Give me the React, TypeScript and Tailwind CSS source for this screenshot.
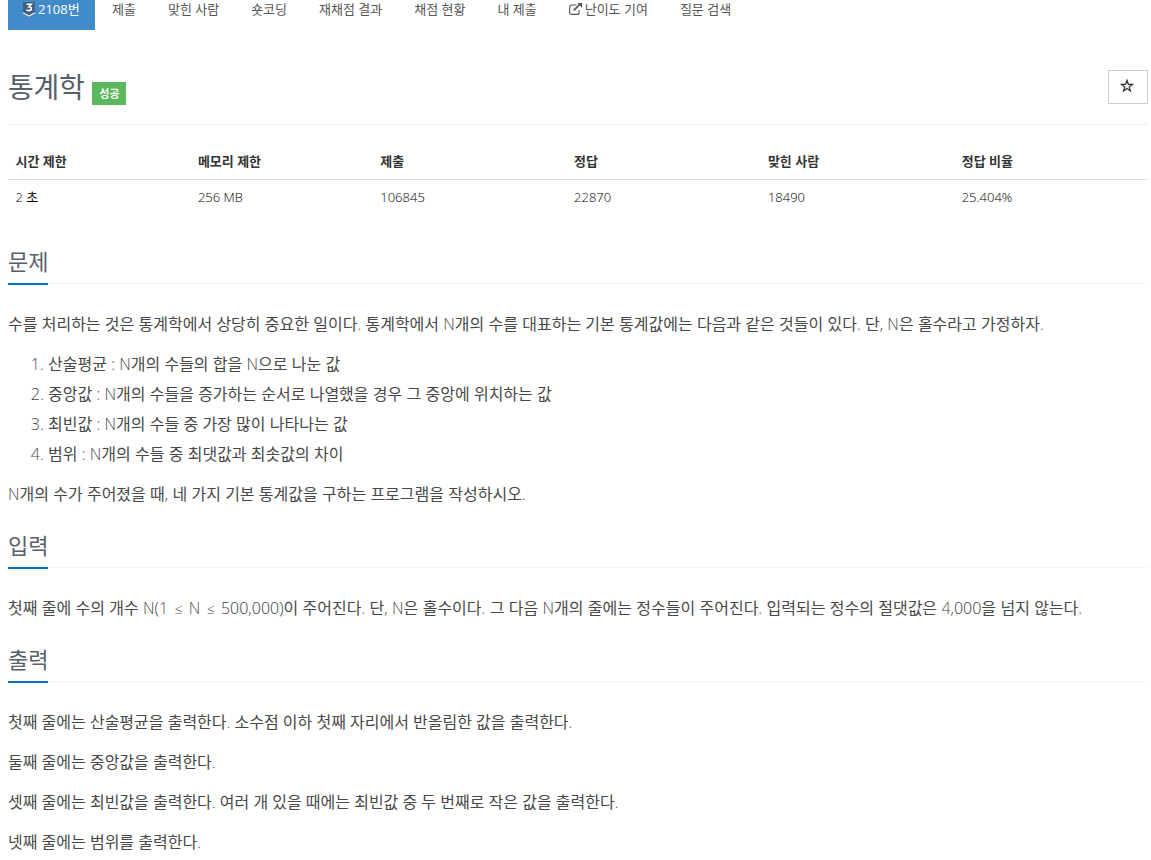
import type { ReactNode } from "react";

const tabs = ["제출", "맞힌 사람", "숏코딩", "재채점 결과", "채점 현황", "내 제출", "난이도 기여", "질문 검색"];

const stats = [
  { label: "시간 제한", value: "2 초", width: "w-[16%]" },
  { label: "메모리 제한", value: "256 MB", width: "w-[16%]" },
  { label: "제출", value: "106845", width: "w-[17%]" },
  { label: "정답", value: "22870", width: "w-[17%]" },
  { label: "맞힌 사람", value: "18490", width: "w-[17%]" },
  { label: "정답 비율", value: "25.404%", width: "w-[17%]" },
];

const TierBadge = () => (
  <svg width="14" height="15" viewBox="0 0 14 15" className="mr-0.5 shrink-0">
    <path d="M1 0h12v11L7 15l-6-4z" fill="#435F7A" />
    <path d="M1 10.800L7 14l6-3.200" fill="none" stroke="#ecf0f4" strokeWidth="1.300" />
    <path d="M4.500 2.200h4.700L7 4.700c3.300 0 3 3.900-.2 3.900-1.100 0-1.900-.3-2.500-.9" fill="none" stroke="#fff" strokeWidth="1.600" />
  </svg>
);

const ExternalIcon = () => (
  <svg width="13" height="12" viewBox="0 0 13 12" className="mr-[3px] shrink-0">
    <path d="M7.500 2H2.600A2 2 0 0 0 .6 4v5.400a2 2 0 0 0 2 2h5.500a2 2 0 0 0 2-2V7" fill="none" stroke="currentColor" strokeWidth="1.100" />
    <path d="M4.800 7.300L10.300 1.800" stroke="currentColor" strokeWidth="1.800" />
    <path d="M8.300 0H13v4.700z" fill="currentColor" />
  </svg>
);

const LessEqual = () => <span className="inline-block w-3 text-center text-sm">≤</span>;

const Section = ({ title, children }: { title: string; children: ReactNode }) => (
  <section>
    <div className="mb-[25px] border-b border-dotted border-[#e4e9f0]">
      <h2 className="-mb-0.5 inline-block border-b-2 border-[#0076C0] pb-[7px] align-top text-[22px] leading-[30px] text-[#585f69]">
        {title}
      </h2>
    </div>
    <div className="mb-[21px] space-y-2.5 text-base leading-[30px] text-[#484848]">{children}</div>
  </section>
);

const App = () => {
  return (
    <div className="h-[860px] overflow-hidden bg-white pr-[3px] pl-2 font-['Open_Sans_Light','Noto_Sans_CJK_KR',sans-serif] text-[13px] text-[#333]">
      <nav className="flex h-[30px] gap-0.5 font-['Open_Sans','Noto_Sans_CJK_KR',sans-serif] whitespace-nowrap text-[#555]">
        <a className="flex h-[30px] w-[87px] items-start bg-[#428bca] pl-3.5 leading-[19px] text-white">
          <span className="mt-0.5 flex">
            <TierBadge />
          </span>
          2108번
        </a>
        {tabs.map((tab) => (
          <a key={tab} className="flex items-start px-[15px] leading-[19px]">
            {tab === "난이도 기여" && (
              <span className="mt-[3px]">
                <ExternalIcon />
              </span>
            )}
            {tab}
          </a>
        ))}
      </nav>

      <header className="mt-10 flex h-[55px] items-start justify-between border-b border-[#eee]">
        <div className="flex">
          <h1 className="text-[28px] leading-[34px] tracking-[-0.3px] text-[#585f69]">통계학</h1>
          <span className="mt-3 ml-2 h-[23px] w-[34px] bg-[#5cb85c] text-center text-[11px] leading-[23px] font-bold text-white">
            성공
          </span>
        </div>
        <button className="flex h-[34px] w-10 items-center justify-center border border-[#ccc] pr-0.5 pb-0.5 text-[#333]">
          <svg width="14" height="14" viewBox="0 0 14 14" fill="none" stroke="currentColor" strokeWidth="1.200">
            <path d="M7 1.300l1.350 4.100h4.250L9.200 7.900l1.300 4.100L7 9.500 3.500 12l1.300-4.100L1.400 5.400h4.250z" />
          </svg>
        </button>
      </header>

      <table className="mt-5 w-full table-fixed border-collapse text-left">
        <thead>
          <tr className="h-[34px] border-b border-[#ddd]">
            {stats.map((s) => (
              <th key={s.label} className={`pr-2 pl-[7.5px] font-bold ${s.width}`}>
                {s.label}
              </th>
            ))}
          </tr>
        </thead>
        <tbody>
          <tr className="h-9">
            {stats.map((s) => (
              <td key={s.label} className="pr-2 pl-[7.5px] text-black">
                {s.value}
              </td>
            ))}
          </tr>
        </tbody>
      </table>

      <main className="mt-[31px]">
        <Section title="문제">
          <p className="[word-spacing:0.1px]">
            수를 처리하는 것은 통계학에서 상당히 중요한 일이다. 통계학에서 N개의 수를 대표하는 기본 통계값에는 다음과 같은
            것들이 있다. 단, N은 홀수라고 가정하자.
          </p>
          <ol className="list-decimal pl-10 [word-spacing:0.1px]">
            <li>산술평균 : N개의 수들의 합을 N으로 나눈 값</li>
            <li>중앙값 : N개의 수들을 증가하는 순서로 나열했을 경우 그 중앙에 위치하는 값</li>
            <li>최빈값 : N개의 수들 중 가장 많이 나타나는 값</li>
            <li>범위 : N개의 수들 중 최댓값과 최솟값의 차이</li>
          </ol>
          <p className="[word-spacing:0.1px]">N개의 수가 주어졌을 때, 네 가지 기본 통계값을 구하는 프로그램을 작성하시오.</p>
        </Section>

        <Section title="입력">
          <p className="[word-spacing:0.17px]">
            첫째 줄에 수의 개수 N(1 <LessEqual /> N <LessEqual /> 500,000)이 주어진다. 단, N은 홀수이다. 그 다음 N개의
            줄에는 정수들이 주어진다. 입력되는 정수의 절댓값은 4,000을 넘지 않는다.
          </p>
        </Section>

        <Section title="출력">
          <p>첫째 줄에는 산술평균을 출력한다. 소수점 이하 첫째 자리에서 반올림한 값을 출력한다.</p>
          <p>둘째 줄에는 중앙값을 출력한다.</p>
          <p>셋째 줄에는 최빈값을 출력한다. 여러 개 있을 때에는 최빈값 중 두 번째로 작은 값을 출력한다.</p>
          <p>넷째 줄에는 범위를 출력한다.</p>
        </Section>
      </main>
    </div>
  );
};

export default App;
